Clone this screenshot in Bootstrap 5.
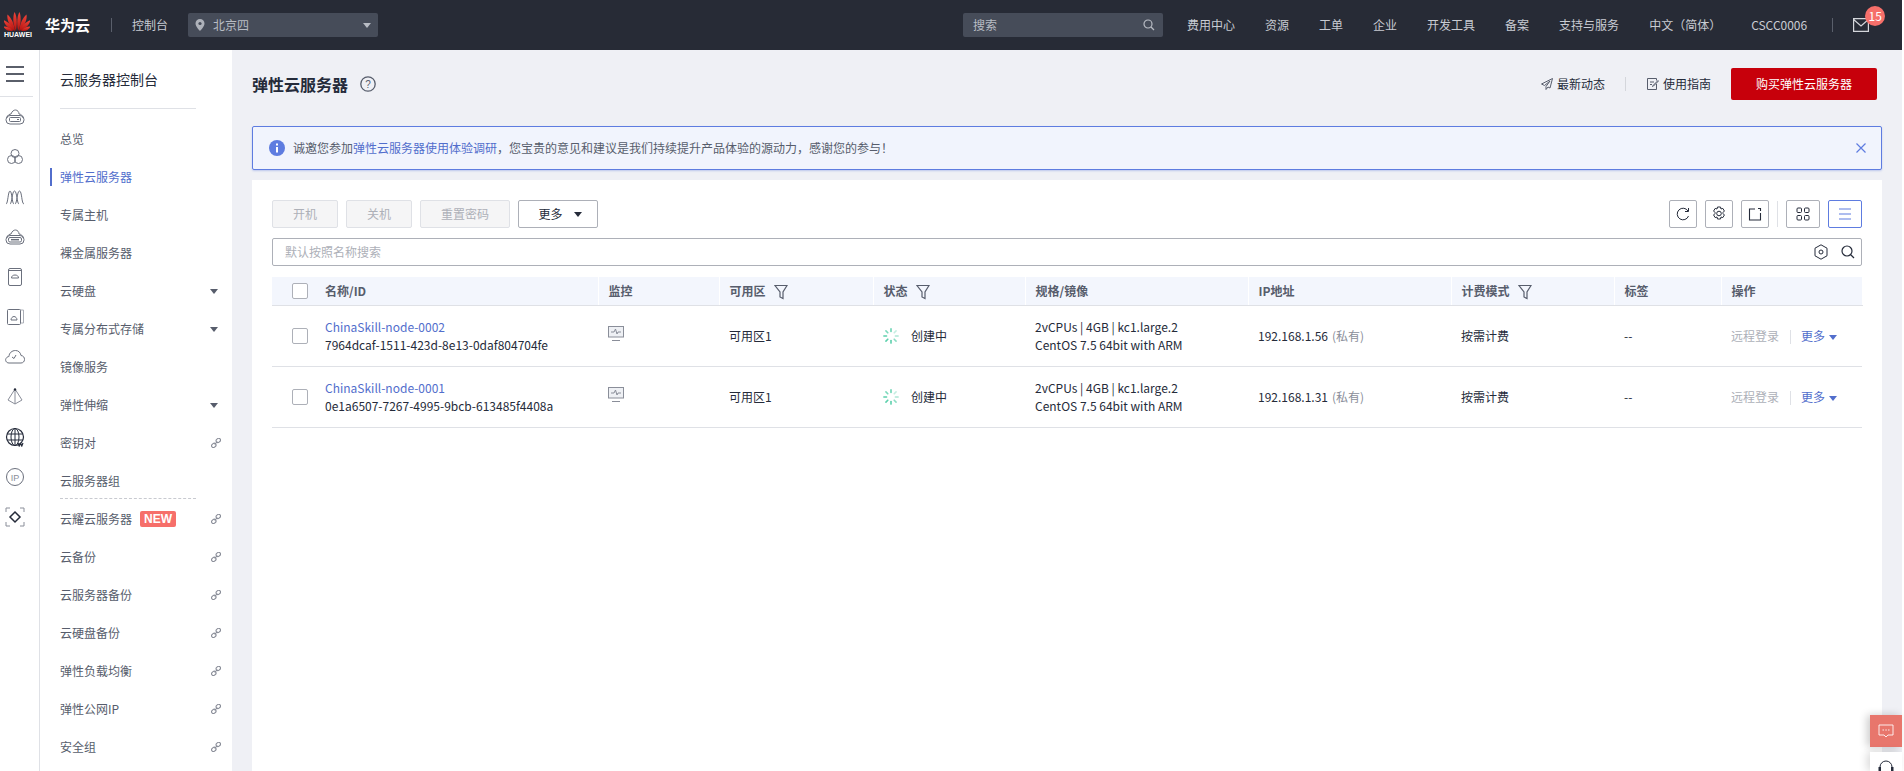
<!DOCTYPE html>
<html lang="zh-CN">
<head>
<meta charset="utf-8">
<title>弹性云服务器</title>
<link href="https://cdn.jsdelivr.net/npm/bootstrap@5.3.0/dist/css/bootstrap.min.css" rel="stylesheet">
<style>
html,body{height:771px;overflow:hidden;background:#fff}
body{font-family:"Noto Sans CJK SC","Noto Sans",sans-serif;font-size:12px;color:#252b3a;line-height:18px}
.app-shell{width:1902px;height:771px;overflow:hidden;background:#eff0f5}
.top-bar{height:50px;background:#272b36;color:#c9ccd3}
.logo-box{width:45px;padding-left:4px;flex:none}
.logo-word{font:bold 7px/8px "Liberation Sans",sans-serif;color:#fff;text-align:center;width:26px}
.brand-text{font-size:15px;font-weight:700;color:#fff;width:66px}
.bar-sep{width:1px;height:14px;background:#5a5f6b}
.console-word{margin-left:20px}
.region-pick{width:190px;height:24px;margin-left:20px;background:#464c59;border-radius:2px;padding:0 7px;color:#b8bcc4}
.top-search{width:200px;height:24px;background:#464c59;border-radius:2px;padding:0 8px 0 10px;color:#b8bcc4;margin:0 24px 0 585px}
.top-links{gap:30px}
.tri-down{width:0;height:0;border-left:4px solid transparent;border-right:4px solid transparent;border-top:5px solid #b8bcc4}
.mail-sep{margin-left:25px}
.mail-box{margin-left:20px;height:14px}
.count-pill{position:absolute;left:12px;top:-12px;width:20px;height:20px;border-radius:50%;background:#f66f6a;color:#fff;font-size:12px;line-height:20px;text-align:center}
.rail{width:40px;background:#fff;border-right:1px solid #dfe1e6;flex:none}
.rail-top{height:47px;width:33px;border-bottom:1px solid #dfe1e6;padding:16px 0 0 6px}
.rail-gap{height:9px}
.rail-ico{height:40px;width:39px;padding-left:5px}
.side-menu{width:192px;background:#fff;flex:none;padding-left:20px}
.menu-title{width:136px;height:59px;line-height:58px;font-size:14px;color:#252b3a;border-bottom:1px solid #dfe1e6;margin-bottom:11px}
.menu-row{height:38px;line-height:38px;color:#575d6c;padding:0 11px 0 0;position:relative}
.menu-row.is-on{color:#526ecc}
.menu-row.is-on::before{content:"";position:absolute;left:-10px;top:10px;width:2px;height:18px;background:#526ecc}
.menu-row.dash-end::after{content:"";position:absolute;left:0;width:136px;bottom:1px;border-bottom:1px dashed #c8cad0}
.menu-tri{width:0;height:0;border-left:4px solid transparent;border-right:4px solid transparent;border-top:5px solid #575d6c;margin-right:3px}
.new-tag{background:#f66f6a;color:#fff;font:700 12px/16px "Liberation Sans",sans-serif;padding:0 4px;border-radius:2px;margin-left:8px}
.main-pane{padding:0 20px;width:1670px;flex:none}
.page-head{height:68px;margin-bottom:8px}
.page-title{font-size:16px;font-weight:700;color:#252b3a;width:108px}
.head-link{color:#252b3a}
.head-sep{width:1px;height:14px;background:#d4d6db;margin:0 21px 0 20px}
.buy-btn{width:146px;height:32px;background:#c7000b;border:0;color:#fff;font-size:12px;border-radius:2px;margin:0 5px 0 20px;padding:0}
.buy-btn:hover{background:#c7000b;color:#fff}
.notice-strip{height:44px;background:#f1f4fd;border:1px solid #5e7ce0;border-radius:2px;margin-bottom:10px;padding:0 14px 0 16px;color:#575d6c;box-shadow:0 1px 2px rgba(94,124,224,.35)}
.blue-txt{color:#526ecc}
.work-card{height:600px;background:#fff;padding:20px}
.tool-row{height:28px;margin-bottom:10px}
.plain-btn{height:28px;font-size:12px;line-height:26px;padding:0;border-radius:2px}
.btn.off-btn,.btn.off-btn:disabled{width:66px;background:#f5f5f6;border:1px solid #dfe1e6;color:#adb0b8;opacity:1;margin-right:8px}
.btn.off-btn.long-one{width:90px}
.btn.more-btn{width:80px;background:#fff;border:1px solid #adb0b8;color:#252b3a;padding-left:4px}
.more-btn .tri-down{display:inline-block;border-top-color:#252b3a;margin-left:11px;vertical-align:2px}
.square-btn{height:28px;width:28px;background:#fff;border:1px solid #adb0b8;border-radius:2px;margin-left:8px}
.square-btn.wide-one{width:34px}
.square-btn.picked{border-color:#5e7ce0}
.tool-sep{width:1px;height:26px;background:#dfe1e6;margin:0 0 0 8px}
.find-box{height:28px;border:1px solid #adb0b8;border-radius:2px;padding:0 6px 0 12px;color:#adb0b8;margin-bottom:11px}
.find-mag{margin-left:12px}
.vm-table{table-layout:fixed;width:1590px;margin:0;border-collapse:collapse;font-size:12px;color:#252b3a}
.vm-table th{height:28px;padding:0 0 0 10px;background:#f3f6fd;color:#575d6c;font-weight:700;border-bottom:1px solid #dfe1e6;border-right:1px solid #fff;vertical-align:middle}
.vm-table td{height:61px;padding:0 0 0 10px;border-bottom:1px solid #dfe1e6;vertical-align:middle;color:#252b3a;background:#fff;box-shadow:none;line-height:18px}
.vm-table .chk-col{padding:0 0 0 20px;border-right:0}
.vm-table .name-col{padding-left:0}
.c-w1{width:53px}.c-w2{width:273px}.c-w3{width:121px}.c-w4{width:154px}.c-w5{width:152px}.c-w6{width:223px}.c-w7{width:203px}.c-w8{width:163px}.c-w9{width:107px}.c-w10{width:141px}
.tick-box{width:16px;height:16px;border:1px solid #adb0b8;border-radius:2px;background:#fff;display:block}
.node-link{color:#526ecc}
.muted-txt{color:#575d6c}
.gray-txt{color:#adb0b8}
.paren-txt{color:#8a8e99;margin-left:4px}
.funnel-ico{vertical-align:-4px;margin-left:8px}
.spin-ico{margin-right:12px}
.act-sep{display:inline-block;width:1px;height:14px;background:#dfe1e6;margin:0 10px 0 11px;vertical-align:-3px}
.act-tri{display:inline-block;width:0;height:0;border-left:4px solid transparent;border-right:4px solid transparent;border-top:5px solid #526ecc;margin-left:4px;vertical-align:1px}
.float-chat{position:fixed;left:1870px;top:715px;width:32px;height:32px;background:#e8766c;box-shadow:-3px 0 8px rgba(0,0,0,.2)}
.float-help{position:fixed;left:1870px;top:752px;width:32px;height:19px;background:#fff;box-shadow:-3px 0 8px rgba(0,0,0,.15)}
.ico{fill:none;stroke:#6b707d;stroke-width:1}
</style>
</head>
<body>
<svg class="d-none" xmlns="http://www.w3.org/2000/svg">
 <symbol id="chain" viewBox="0 0 10 10"><g fill="none" stroke="#8a8e99" stroke-width="1.1"><rect x="5" y="0.6" width="4.6" height="3.6" rx="1.8" transform="rotate(-40 7.3 2.4)"/><rect x="0.5" y="5.6" width="4.6" height="3.6" rx="1.8" transform="rotate(-40 2.8 7.4)"/><path d="M3.6 6.4 6.4 3.6"/></g></symbol>
 <symbol id="funnel" viewBox="0 0 14 16"><path d="M1 1.5h12L9 8v6.5L6 13V8z" fill="none" stroke="#575d6c" stroke-width="1.2"/></symbol>
 <symbol id="monitor" viewBox="0 0 16 16"><g fill="none" stroke="#8a8e99"><rect x=".5" y=".5" width="15" height="10.5" fill="#eef0f4"/><path d="M3 6h3l1.500-3 1.500 5 1-2h3M4 14.500h8"/></g></symbol>
 <symbol id="spin" viewBox="0 0 18 18"><g stroke="#5cd0ac" stroke-width="1.8" stroke-linecap="round"><path d="M9 1v3" opacity=".9"/><path d="M14.700 3.300l-2.100 2.100" opacity=".35"/><path d="M17 9h-3" opacity=".5"/><path d="M14.700 14.700l-2.100-2.100" opacity=".7"/><path d="M9 17v-3"/><path d="M3.300 14.700l2.100-2.100"/><path d="M1 9h3"/><path d="M3.300 3.300l2.100 2.100" opacity=".8"/></g></symbol>
</svg>
<div class="app-shell">
 <header class="top-bar d-flex align-items-center">
  <div class="logo-box">
   <svg width="26" height="19" viewBox="0 0 26 19" class="d-block"><defs><linearGradient id="pet" x1="0" y1="0" x2="0" y2="1"><stop offset="0" stop-color="#f0453a"/><stop offset="1" stop-color="#b3120f"/></linearGradient></defs>
    <g fill="url(#pet)" transform="translate(13 19)"><path d="M-1 0C-4-6-4.500-14-2.500-19-.5-16 .6-9-1 0Z"/><path d="M-2 .2C-7-4-10.500-11-9.500-16.500-6-13.500-3-8-2 .2Z"/><path d="M-3-.5C-8-2-12.500-6-13.500-11-9-9-5-6-3-.5Z"/><path d="M-4 0C-8 .5-12-1-13.500-4.500-10-4.500-6-3-4 0Z"/><path d="M1 0C4-6 4.500-14 2.500-19 .5-16-.6-9 1 0Z"/><path d="M2 .2C7-4 10.500-11 9.500-16.500 6-13.500 3-8 2 .2Z"/><path d="M3-.5C8-2 12.500-6 13.500-11 9-9 5-6 3-.5Z"/><path d="M4 0C8 .5 12-1 13.500-4.500 10-4.500 6-3 4 0Z"/></g></svg>
   <div class="logo-word">HUAWEI</div>
  </div>
  <div class="brand-text">华为云</div>
  <div class="bar-sep"></div>
  <div class="console-word">控制台</div>
  <div class="region-pick d-flex align-items-center">
   <svg width="10" height="12" viewBox="0 0 10 12" class="me-2"><path d="M5 0a4.500 4.500 0 0 1 4.500 4.500C9.500 7.500 5 12 5 12S.5 7.500.5 4.500A4.500 4.500 0 0 1 5 0Z" fill="#aeb2ba"/><circle cx="5" cy="4.500" r="1.600" fill="#464c59"/></svg>
   <span class="flex-grow-1">北京四</span><span class="tri-down"></span>
  </div>
  <div class="top-search d-flex align-items-center justify-content-between">
   <span>搜索</span>
   <svg width="12" height="12" viewBox="0 0 12 12"><circle cx="5" cy="5" r="4" fill="none" stroke="#b8bcc4" stroke-width="1.200"/><path d="M8 8l3 3" stroke="#b8bcc4" stroke-width="1.200"/></svg>
  </div>
  <nav class="top-links d-flex align-items-center">
   <span>费用中心</span><span>资源</span><span>工单</span><span>企业</span><span>开发工具</span><span>备案</span><span>支持与服务</span><span>中文（简体）</span><span>CSCC0006</span>
  </nav>
  <div class="bar-sep mail-sep"></div>
  <div class="position-relative mail-box">
   <svg width="16" height="14" viewBox="0 0 16 14" class="d-block"><path d="M.6.6h14.800v12.800H.6zM.6 1.500 8 8l7.400-6.500" fill="none" stroke="#d4d6db" stroke-width="1.200"/></svg>
   <span class="count-pill">15</span>
  </div>
 </header>
 <div class="d-flex">
  <aside class="rail">
   <div class="rail-top">
    <svg width="18" height="16" viewBox="0 0 18 16" class="d-block"><path d="M0 1h18M0 8h18M0 15h18" stroke="#252b3a" stroke-width="1.600"/></svg>
   </div>
   <div class="rail-gap"></div>
   <div class="rail-ico"><svg width="20" height="20" viewBox="0 0 20 20" class="ico"><path d="M2 11C2 8 5 7 6 7 7 4 9 3 10.500 3 12.500 3 14 5 14 7 16 7 18 9 18 11"/><rect x="1" y="8.500" width="18" height="8.500" rx="4"/><rect x="4.500" y="10.500" width="11" height="4" rx="1"/><path d="M12 12.500h2"/></svg></div>
   <div class="rail-ico"><svg width="20" height="20" viewBox="0 0 20 20" class="ico"><circle cx="10" cy="6.500" r="4"/><circle cx="6.500" cy="12.500" r="4"/><circle cx="13.500" cy="12.500" r="4"/></svg></div>
   <div class="rail-ico"><svg width="20" height="20" viewBox="0 0 20 20" class="ico"><path d="M1 17C3 17 3 4 5 4s2 13 4 13M5 17C7 17 7 4 9.500 4S12 17 14 17M10 17c2 0 2-13 4.500-13s2 13 4.500 13"/></svg></div>
   <div class="rail-ico"><svg width="20" height="20" viewBox="0 0 20 20" class="ico"><path d="M2 11C2 8 5 7 6 7 7 4 9 3 10.500 3 12.500 3 14 5 14 7 16 7 18 9 18 11"/><rect x="1" y="8.500" width="18" height="8.500" rx="4"/><rect x="3.500" y="10.500" width="13" height="4.500" rx="1.500"/><path d="M6 12.700h8" stroke-width="1.500"/></svg></div>
   <div class="rail-ico"><svg width="20" height="20" viewBox="0 0 20 20" class="ico"><rect x="3.500" y="1.500" width="13" height="17" rx="1.500"/><path d="M6.500 11c0-2 1.500-3 3.500-3s3.500 1 3.500 3zM4 3.500h12"/></svg></div>
   <div class="rail-ico"><svg width="20" height="20" viewBox="0 0 20 20" class="ico"><path d="M15 3h3.500v13H16" stroke="#adb0b8"/><rect x="2.500" y="2.500" width="13" height="15" rx="1"/><path d="M6 13c0-2 1.500-3.500 3-3.500s3 1.500 3 3.500z"/></svg></div>
   <div class="rail-ico"><svg width="20" height="20" viewBox="0 0 20 20" class="ico"><path d="M4 16C1 16 0 13 1 11.500 2 9.500 4 9.500 4 9.500 4 6 7 3.500 10.500 3.500c3 0 5 2 5.500 5 2.500.3 3.500 2 3.500 4s-1.500 3.500-3.500 3.500z"/><path d="M11 8l-2 3.500L7 10"/></svg></div>
   <div class="rail-ico"><svg width="20" height="20" viewBox="0 0 20 20" fill="none" stroke="#8a8e99"><path d="M10 2 3 13l7 4 7-4zM10 2v15"/><circle cx="10" cy="2.500" r="1.200" fill="#252b3a" stroke="none"/></svg></div>
   <div class="rail-ico"><svg width="20" height="20" viewBox="0 0 20 20" fill="none" stroke="#252b3a"><circle cx="10" cy="10" r="8.500" stroke-width="1.200"/><ellipse cx="10" cy="10" rx="4" ry="8.500"/><path d="M10 1.500v17M2 7h16M2 13h16"/><path d="M13 16l1.200 3 1.300-2.500 1.300 2.500 1.200-3" stroke-width="1.200"/></svg></div>
   <div class="rail-ico"><svg width="20" height="20" viewBox="0 0 20 20" class="ico"><circle cx="10" cy="10" r="8.500"/><text x="10" y="13.500" text-anchor="middle" font-size="9" font-family="Liberation Sans" fill="#8a8e99" stroke="none">IP</text></svg></div>
   <div class="rail-ico"><svg width="20" height="20" viewBox="0 0 20 20" fill="none" stroke="#8a8e99"><path d="M1 5V1h4M15 1h4v4M19 15v4h-4M5 19H1v-4"/><path d="M10 5l5 5-5 5-5-5z" stroke="#252b3a" stroke-width="1.500"/></svg></div>
  </aside>
  <aside class="side-menu">
   <div class="menu-title">云服务器控制台</div>
   <div class="menu-row">总览</div>
   <div class="menu-row is-on">弹性云服务器</div>
   <div class="menu-row">专属主机</div>
   <div class="menu-row">裸金属服务器</div>
   <div class="menu-row d-flex align-items-center justify-content-between"><span>云硬盘</span><i class="menu-tri"></i></div>
   <div class="menu-row d-flex align-items-center justify-content-between"><span>专属分布式存储</span><i class="menu-tri"></i></div>
   <div class="menu-row">镜像服务</div>
   <div class="menu-row d-flex align-items-center justify-content-between"><span>弹性伸缩</span><i class="menu-tri"></i></div>
   <div class="menu-row d-flex align-items-center justify-content-between"><span>密钥对</span><svg width="10" height="10"><use href="#chain"/></svg></div>
   <div class="menu-row dash-end">云服务器组</div>
   <div class="menu-row d-flex align-items-center"><span>云耀云服务器</span><span class="new-tag">NEW</span><svg class="ms-auto" width="10" height="10"><use href="#chain"/></svg></div>
   <div class="menu-row d-flex align-items-center justify-content-between"><span>云备份</span><svg width="10" height="10"><use href="#chain"/></svg></div>
   <div class="menu-row d-flex align-items-center justify-content-between"><span>云服务器备份</span><svg width="10" height="10"><use href="#chain"/></svg></div>
   <div class="menu-row d-flex align-items-center justify-content-between"><span>云硬盘备份</span><svg width="10" height="10"><use href="#chain"/></svg></div>
   <div class="menu-row d-flex align-items-center justify-content-between"><span>弹性负载均衡</span><svg width="10" height="10"><use href="#chain"/></svg></div>
   <div class="menu-row d-flex align-items-center justify-content-between"><span>弹性公网IP</span><svg width="10" height="10"><use href="#chain"/></svg></div>
   <div class="menu-row d-flex align-items-center justify-content-between"><span>安全组</span><svg width="10" height="10"><use href="#chain"/></svg></div>
  </aside>
  <main class="main-pane">
   <div class="page-head d-flex align-items-center">
    <div class="page-title">弹性云服务器</div>
    <svg width="16" height="16" viewBox="0 0 16 16"><circle cx="8" cy="8" r="7.200" fill="none" stroke="#575d6c" stroke-width="1.300"/><text x="8" y="11.500" text-anchor="middle" font-size="10" font-family="Liberation Sans" fill="#575d6c">?</text></svg>
    <div class="ms-auto d-flex align-items-center head-link">
     <svg width="12" height="12" viewBox="0 0 12 12" class="me-1"><path d="M11.500.5.500 6l3 1.500L9 3 5 8.500v3L7 9l2 1z" fill="none" stroke="#575d6c"/></svg><span>最新动态</span>
     <span class="head-sep"></span>
     <svg width="12" height="12" viewBox="0 0 12 12" class="me-1"><path d="M9.500 6v5.500h-9V.5h9v2M3 4h4M3 6.500h2M11.500 3 6.500 8l-1 .5.500-1 5-5z" fill="none" stroke="#575d6c"/></svg><span>使用指南</span>
    </div>
    <button type="button" class="btn buy-btn">购买弹性云服务器</button>
   </div>
   <div class="notice-strip d-flex align-items-center">
    <svg width="16" height="16" viewBox="0 0 16 16" class="me-2"><circle cx="8" cy="8" r="8" fill="#5e7ce0"/><rect x="7" y="7" width="2" height="5.500" fill="#fff"/><rect x="7" y="3.500" width="2" height="2" fill="#fff"/></svg>
    <span>诚邀您参加<span class="blue-txt">弹性云服务器使用体验调研</span>，您宝贵的意见和建议是我们持续提升产品体验的源动力，感谢您的参与！</span>
    <svg width="12" height="12" viewBox="0 0 12 12" class="ms-auto"><path d="M1.500 1.500l9 9M10.500 1.500l-9 9" stroke="#5e7ce0" stroke-width="1.200"/></svg>
   </div>
   <section class="work-card">
    <div class="tool-row d-flex align-items-center">
     <button type="button" class="btn plain-btn off-btn" disabled>开机</button>
     <button type="button" class="btn plain-btn off-btn" disabled>关机</button>
     <button type="button" class="btn plain-btn off-btn long-one" disabled>重置密码</button>
     <button type="button" class="btn plain-btn more-btn">更多<span class="tri-down"></span></button>
     <button type="button" class="square-btn ms-auto d-flex align-items-center justify-content-center p-0"><svg width="14" height="14" viewBox="0 0 14 14"><path d="M12 4A5.800 5.800 0 1 0 12.500 9M12.500 1v3.500H9" fill="none" stroke="#252b3a"/></svg></button>
     <button type="button" class="square-btn d-flex align-items-center justify-content-center p-0"><svg width="16" height="16" viewBox="0 0 16 16"><path d="M6.500 1h3l.5 2 1.800-.6 1.600 2.600-1.400 1.500v1l1.400 1.500-1.600 2.600-1.800-.6-.5 2h-3l-.5-2-1.800.6L2.600 9l1.400-1.500v-1L2.600 5l1.600-2.600 1.800.6z" fill="none" stroke="#252b3a"/><circle cx="8" cy="7.500" r="2.300" fill="none" stroke="#252b3a"/></svg></button>
     <button type="button" class="square-btn d-flex align-items-center justify-content-center p-0"><svg width="14" height="14" viewBox="0 0 14 14"><path d="M7 2H1.500v11h11V6M10 1.500h2.500V4" fill="none" stroke="#252b3a" stroke-width="1.100"/></svg></button>
     <span class="tool-sep"></span>
     <button type="button" class="square-btn wide-one d-flex align-items-center justify-content-center p-0"><svg width="14" height="14" viewBox="0 0 14 14"><g fill="none" stroke="#252b3a"><rect x="1" y="1" width="4.500" height="4.500" rx="1"/><rect x="8.500" y="1" width="4.500" height="4.500" rx="1"/><rect x="1" y="8.500" width="4.500" height="4.500" rx="1"/><rect x="8.500" y="8.500" width="4.500" height="4.500" rx="1"/></g></svg></button>
     <button type="button" class="square-btn wide-one picked d-flex align-items-center justify-content-center p-0"><svg width="14" height="12" viewBox="0 0 14 12"><path d="M1 1h12M1 6h12M1 11h12" stroke="#5e7ce0" stroke-width="1.200"/></svg></button>
    </div>
    <div class="find-box d-flex align-items-center">
     <span>默认按照名称搜索</span>
     <svg width="16" height="16" viewBox="0 0 16 16" class="ms-auto"><path d="M8 .8l6 3.400v7.600l-6 3.400-6-3.400V4.200z" fill="none" stroke="#252b3a"/><circle cx="8" cy="8" r="2" fill="none" stroke="#252b3a"/></svg>
     <svg width="14" height="14" viewBox="0 0 14 14" class="find-mag"><circle cx="6" cy="6" r="5" fill="none" stroke="#252b3a" stroke-width="1.200"/><path d="M9.500 9.500 13 13" stroke="#252b3a" stroke-width="1.200"/></svg>
    </div>
    <table class="table vm-table">
     <colgroup><col class="c-w1"><col class="c-w2"><col class="c-w3"><col class="c-w4"><col class="c-w5"><col class="c-w6"><col class="c-w7"><col class="c-w8"><col class="c-w9"><col class="c-w10"></colgroup>
     <thead><tr>
      <th class="chk-col"><span class="tick-box"></span></th><th class="name-col">名称/ID</th><th>监控</th>
      <th>可用区<svg class="funnel-ico" width="14" height="16"><use href="#funnel"/></svg></th>
      <th>状态<svg class="funnel-ico" width="14" height="16"><use href="#funnel"/></svg></th>
      <th>规格/镜像</th><th>IP地址</th>
      <th>计费模式<svg class="funnel-ico" width="14" height="16"><use href="#funnel"/></svg></th>
      <th>标签</th><th>操作</th>
     </tr></thead>
     <tbody>
      <tr>
       <td class="chk-col"><span class="tick-box"></span></td>
       <td class="name-col"><div class="node-link">ChinaSkill-node-0002</div><div>7964dcaf-1511-423d-8e13-0daf804704fe</div></td>
       <td><svg width="16" height="16" class="d-block mb-1"><use href="#monitor"/></svg></td>
       <td>可用区1</td>
       <td><div class="d-flex align-items-center"><svg width="16" height="16" class="spin-ico"><use href="#spin"/></svg><span>创建中</span></div></td>
       <td><div>2vCPUs | 4GB | kc1.large.2</div><div>CentOS 7.5 64bit with ARM</div></td>
       <td class="muted-txt">192.168.1.56<span class="paren-txt">(私有)</span></td>
       <td>按需计费</td><td>--</td>
       <td class="text-nowrap"><span class="gray-txt">远程登录</span><span class="act-sep"></span><span class="blue-txt">更多</span><span class="act-tri"></span></td>
      </tr>
      <tr>
       <td class="chk-col"><span class="tick-box"></span></td>
       <td class="name-col"><div class="node-link">ChinaSkill-node-0001</div><div>0e1a6507-7267-4995-9bcb-613485f4408a</div></td>
       <td><svg width="16" height="16" class="d-block mb-1"><use href="#monitor"/></svg></td>
       <td>可用区1</td>
       <td><div class="d-flex align-items-center"><svg width="16" height="16" class="spin-ico"><use href="#spin"/></svg><span>创建中</span></div></td>
       <td><div>2vCPUs | 4GB | kc1.large.2</div><div>CentOS 7.5 64bit with ARM</div></td>
       <td class="muted-txt">192.168.1.31<span class="paren-txt">(私有)</span></td>
       <td>按需计费</td><td>--</td>
       <td class="text-nowrap"><span class="gray-txt">远程登录</span><span class="act-sep"></span><span class="blue-txt">更多</span><span class="act-tri"></span></td>
      </tr>
     </tbody>
    </table>
   </section>
  </main>
 </div>
</div>
<div class="float-chat d-flex align-items-center justify-content-center"><svg width="16" height="16" viewBox="0 0 16 16"><path d="M1 2h14v10H10l-2 2-2-2H1z" fill="none" stroke="#fff" stroke-opacity=".85"/><path d="M4.500 7h1.500M7.300 7h1.500M10 7h1.500" stroke="#fff" stroke-opacity=".85"/></svg></div>
<div class="float-help d-flex justify-content-center pt-2"><svg width="16" height="11" viewBox="0 0 16 11"><path d="M2 9V7a6 6 0 0 1 12 0v2" fill="none" stroke="#252b3a"/><rect x="0.500" y="7" width="2.500" height="4" fill="#252b3a"/><rect x="13" y="7" width="2.500" height="4" fill="#252b3a"/></svg></div>
</body>
</html>
